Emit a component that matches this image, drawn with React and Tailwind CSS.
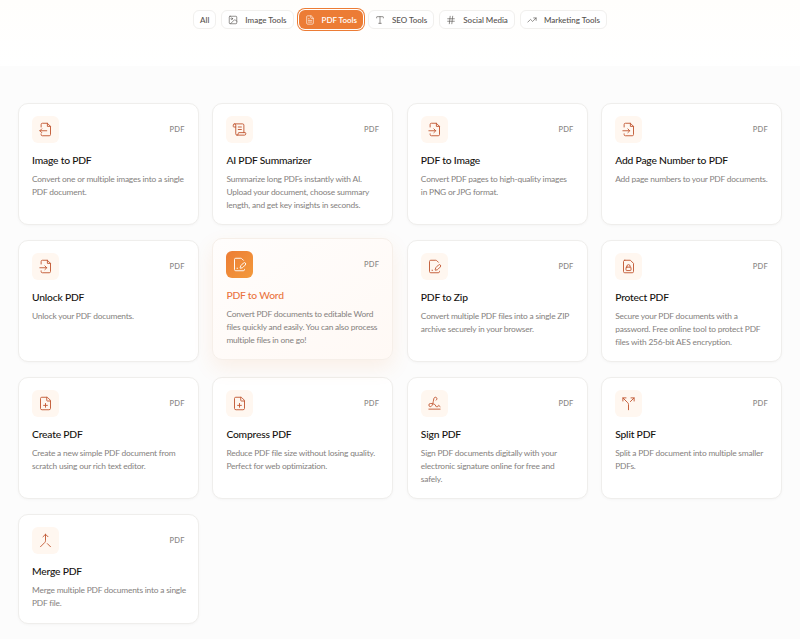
import { Image, FileText, Type, Hash, TrendingUp, ScrollText, FilePenLine, FilePlus, Signature, Split, Merge } from "lucide-react";

// file outline with a small arrow, lucide has no exact match for these
const FileArrow = ({ dir = "in", className }) => (
  <svg viewBox="0 0 24 24" fill="none" stroke="currentColor" strokeWidth="1.5" strokeLinecap="round" strokeLinejoin="round" className={className}>
    <path d="M5 8V4a2 2 0 0 1 2-2h8l5 5v13a2 2 0 0 1-2 2H7a2 2 0 0 1-2-2v-1" />
    <path d="M15 2v5h5" />
    <path d="M3 14h11" />
    {dir === "in" ? <path d="m11 11 3 3-3 3" /> : <path d="m6 11-3 3 3 3" />}
  </svg>
);

// file with a padlock centred in it
const FilePadlock = ({ className }) => (
  <svg viewBox="0 0 24 24" fill="none" stroke="currentColor" strokeWidth="1.5" strokeLinecap="round" strokeLinejoin="round" className={className}>
    <path d="M6 2h9l5 5v13a2 2 0 0 1-2 2H6a2 2 0 0 1-2-2V4a2 2 0 0 1 2-2z" />
    <rect x="8" y="13" width="8" height="5.5" rx="1" />
    <path d="M9.5 13v-1.5a2.5 2.5 0 0 1 5 0V13" />
  </svg>
);

const pills = [
  { label: "All" },
  { label: "Image Tools", Icon: Image },
  { label: "PDF Tools", Icon: FileText, active: true },
  { label: "SEO Tools", Icon: Type },
  { label: "Social Media", Icon: Hash },
  { label: "Marketing Tools", Icon: TrendingUp },
];

const tools = [
  { title: "Image to PDF", desc: "Convert one or multiple images into a single PDF document.", icon: <FileArrow dir="out" className="w-[15px] h-[15px]" /> },
  { title: "AI PDF Summarizer", desc: "Summarize long PDFs instantly with AI. Upload your document, choose summary length, and get key insights in seconds.", icon: <ScrollText className="w-[15px] h-[15px]" strokeWidth={1.5} /> },
  { title: "PDF to Image", desc: "Convert PDF pages to high-quality images in\u00a0PNG or JPG format.", icon: <FileArrow className="w-[15px] h-[15px]" /> },
  { title: "Add Page Number to PDF", desc: "Add page numbers to your PDF documents.", icon: <FileArrow className="w-[15px] h-[15px]" /> },
  { title: "Unlock PDF", desc: "Unlock your PDF documents.", icon: <FileArrow className="w-[15px] h-[15px]" /> },
  { title: "PDF to Word", desc: "Convert PDF documents to editable Word files quickly and easily. You can also process multiple files in one go!", icon: <FilePenLine className="w-[15px] h-[15px]" strokeWidth={1.5} />, hot: true },
  { title: "PDF to Zip", desc: "Convert multiple PDF files into a single ZIP archive securely in your browser.", icon: <FilePenLine className="w-[15px] h-[15px]" strokeWidth={1.5} /> },
  { title: "Protect PDF", desc: "Secure your PDF documents with a password. Free online tool to protect PDF files with 256-bit AES encryption.", icon: <FilePadlock className="w-[15px] h-[15px]" /> },
  { title: "Create PDF", desc: "Create a new simple PDF document from scratch using our rich text editor.", icon: <FilePlus className="w-[15px] h-[15px]" strokeWidth={1.5} /> },
  { title: "Compress PDF", desc: "Reduce PDF file size without losing quality. Perfect for web optimization.", icon: <FilePlus className="w-[15px] h-[15px]" strokeWidth={1.5} /> },
  { title: "Sign PDF", desc: "Sign PDF documents digitally with your electronic signature online for free and safely.", icon: <Signature className="w-[15px] h-[15px]" strokeWidth={1.5} /> },
  { title: "Split PDF", desc: "Split a PDF document into multiple smaller PDFs.", icon: <Split className="w-[15px] h-[15px]" strokeWidth={1.5} /> },
  { title: "Merge PDF", desc: "Merge multiple PDF documents into a single PDF file.", icon: <Merge className="w-[15px] h-[15px]" strokeWidth={1.5} /> },
];

function Pill({ label, Icon, active }) {
  return (
    <button
      className={
        active
          ? "h-[19px] flex items-center gap-[7px] px-[6px] rounded-[6px] bg-[#ec7c35] text-white font-semibold text-[8px] ring-1 ring-[#ec7c35] ring-offset-1 ring-offset-white"
          : "h-[19px] flex items-center gap-[7px] px-[6px] rounded-[6px] bg-white border border-[#f1f0ee] text-[#55514e] font-medium text-[8px]"
      }
    >
      {Icon && <Icon className="w-[10px] h-[10px]" strokeWidth={1.5} />}
      <span>{label}</span>
    </button>
  );
}

function ToolCard({ title, desc, icon, hot }) {
  return (
    <div
      className={
        hot
          ? "relative -top-0.5 min-h-[110px] rounded-[10px] border border-[#f6efe9] bg-gradient-to-br from-[#fffdfc] to-[#fff9f5] pl-[13px] pr-[10px] pt-[12px] pb-[12px] shadow-[0_8px_20px_rgba(236,124,53,0.10)]"
          : "min-h-[110px] rounded-[10px] border border-[#efeeec] bg-white pl-[13px] pr-[10px] pt-[12px] pb-[12px] shadow-[0_1px_3px_rgba(0,0,0,0.03)]"
      }
    >
      <div className="flex items-center justify-between pr-[3px]">
        <div
          className={
            hot
              ? "w-[27px] h-[27px] rounded-[6px] flex items-center justify-center text-white bg-gradient-to-br from-[#ec7c35] to-[#f39a3c]"
              : "w-[27px] h-[27px] rounded-[6px] flex items-center justify-center text-[#c25a35] bg-[#fff7f0]"
          }
        >
          {icon}
        </div>
        <span className="text-[7.5px] tracking-[0.03em] text-[#8a8684] font-medium">PDF</span>
      </div>
      <h3 className={hot ? "mt-[9px] text-[10.3px] tracking-[-0.2px] leading-[16px] font-medium text-[#ea7440]" : "mt-[9px] text-[10.3px] tracking-[-0.2px] leading-[16px] font-medium text-[#16130f]"}>
        {title}
      </h3>
      <p className="mt-[5px] text-[8.4px] tracking-[-0.2px] leading-[13px] text-[#85817e]">{desc}</p>
    </div>
  );
}

export default function App() {
  return (
    <div className="min-h-[639px] bg-[#fcfcfc] font-['Lato','Noto_Sans',sans-serif]">
      <div className="h-[66px] pt-[10px] bg-gradient-to-b from-[#fffefc] to-white">
        <div className="flex justify-center gap-[5px]">
          {pills.map((p) => (
            <Pill key={p.label} {...p} />
          ))}
        </div>
      </div>
      <div className="px-[18px] pt-[37px] pb-[15px] grid grid-cols-4 gap-x-[13.67px] gap-y-[15px]">
        {tools.map((t) => (
          <ToolCard key={t.title} {...t} />
        ))}
      </div>
    </div>
  );
}
